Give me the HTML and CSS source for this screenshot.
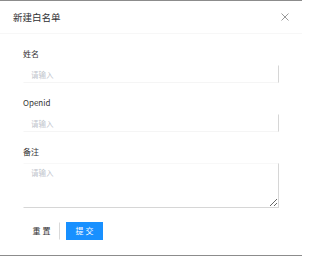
FILE: index.html
```html
<!DOCTYPE html>
<html lang="zh-CN">
<head>
<meta charset="utf-8">
<title>新建白名单</title>
<link rel="stylesheet" href="styles.css">
</head>
<body>
<div class="dialog">
  <div class="header">
    <span class="title">新建白名单</span>
    <svg class="close" width="8" height="8" viewBox="0 0 8 8"><path d="M0.5 0.5L7.5 7.5M7.5 0.5L0.5 7.5" stroke="#9a9a9a" stroke-width="1"/></svg>
  </div>
  <form class="body">
    <div class="item">
      <label class="label">姓名</label>
      <input class="input" type="text" placeholder="请输入">
    </div>
    <div class="item">
      <label class="label">Openid</label>
      <input class="input" type="text" placeholder="请输入">
    </div>
    <div class="item">
      <label class="label">备注</label>
      <textarea class="textarea" placeholder="请输入"></textarea>
    </div>
    <div class="actions">
      <button type="button" class="btn btn-reset">重 置</button>
      <button type="button" class="btn btn-submit">提 交</button>
    </div>
  </form>
</div>
</body>
</html>
```
FILE: styles.css
```css
html, body {
  margin: 0;
  padding: 0;
  background: #fff;
}
body {
  font-family: "Noto Sans CJK SC", "Noto Sans", sans-serif;
  color: #303133;
}
.dialog {
  width: 302px;
  height: 256px;
  box-sizing: border-box;
  border-top: 1px solid #8c8c8c;
  border-bottom: 1px solid #8c8c8c;
  background: #fff;
}
.header {
  height: 33px;
  box-sizing: border-box;
  display: flex;
  align-items: center;
  justify-content: space-between;
  padding: 0 13px 0 13px;
  border-bottom: 1px solid #f7f7f7;
}
.title {
  font-size: 9.5px;
  line-height: 12px;
  color: #303133;
}
.close {
  display: block;
}
.body {
  padding: 14px 23px 0 23px;
  display: flex;
  flex-direction: column;
}
.item {
  display: flex;
  flex-direction: column;
  gap: 5px;
  margin-bottom: 14px;
}
.label {
  font-size: 8px;
  line-height: 12px;
  color: #333;
}
.input, .textarea {
  display: block;
  width: 100%;
  box-sizing: border-box;
  margin: 0;
  font-family: "Noto Sans CJK SC", "Noto Sans", sans-serif;
  font-size: 7.5px;
  color: #606266;
  background: #fff;
  outline: none;
  border-style: solid;
  border-width: 1px;
  border-color: #fff #d6d6d6 #f5f5f5 #fff;
  border-radius: 0;
  padding: 0 0 0 7px;
}
.input {
  height: 18px;
}
.textarea {
  height: 45px;
  padding-top: 3px;
  resize: vertical;
  border-color: #f8f8f8 #d6d6d6 #d6d6d6 #fff;
}
.input::placeholder, .textarea::placeholder {
  color: #c0c4cc;
}
.actions {
  display: flex;
  gap: 6px;
}
.btn {
  height: 18px;
  width: 37px;
  box-sizing: border-box;
  font-family: "Noto Sans CJK SC", "Noto Sans", sans-serif;
  font-size: 8px;
  line-height: 16px;
  padding: 0;
  border-radius: 0;
  cursor: pointer;
}
.btn-reset {
  background: #fff;
  color: #333;
  border: 1px solid #fff;
  border-right-color: #d9d9d9;
}
.btn-submit {
  background: #1890ff;
  color: #fff;
  border: 1px solid #1890ff;
}
```
